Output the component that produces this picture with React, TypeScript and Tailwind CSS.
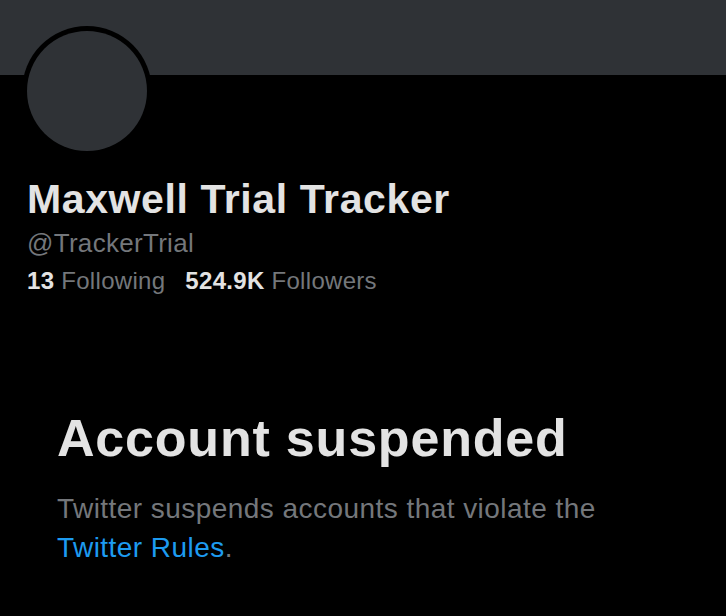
export default function App() {
  return (
    <div className="w-[726px] h-[616px] bg-black overflow-hidden font-['Liberation_Sans',Arial,sans-serif]">
      {/* Banner */}
      <div className="h-[75px] bg-[#2f3236]" />

      {/* Avatar + profile info */}
      <div className="px-[27px]">
        <div className="-mt-[49px] ml-[-5px] w-[130px] h-[130px] rounded-full bg-black p-[5px]">
          <div className="w-full h-full rounded-full bg-[#2f3236]" />
        </div>

        <h1 className="mt-[19px] text-[41px] leading-[48px] font-bold text-[#e3e3e3] tracking-[0.6px]">
          Maxwell Trial Tracker
        </h1>
        <p className="mt-[3px] text-[26px] leading-[34px] text-[#74777b] tracking-[0.3px]">@TrackerTrial</p>
        <div className="mt-[5px] flex gap-[20px] text-[24px] leading-[32px] text-[#74777b] tracking-[0.3px]">
          <span>
            <span className="font-bold text-[#e3e3e3]">13</span> Following
          </span>
          <span>
            <span className="font-bold text-[#e3e3e3]">524.9K</span> Followers
          </span>
        </div>
      </div>

      {/* Suspended notice */}
      <div className="px-[57px] mt-[111px]">
        <h2 className="text-[52px] leading-[60px] font-bold text-[#e3e3e3] tracking-[0.8px]">Account suspended</h2>
        <p className="mt-[21px] text-[28px] leading-[39px] text-[#74777b] tracking-[0.45px]">
          Twitter suspends accounts that violate the
          <br />
          <a className="text-[#1d9bf0]">Twitter Rules</a>.
        </p>
      </div>
    </div>
  );
}
